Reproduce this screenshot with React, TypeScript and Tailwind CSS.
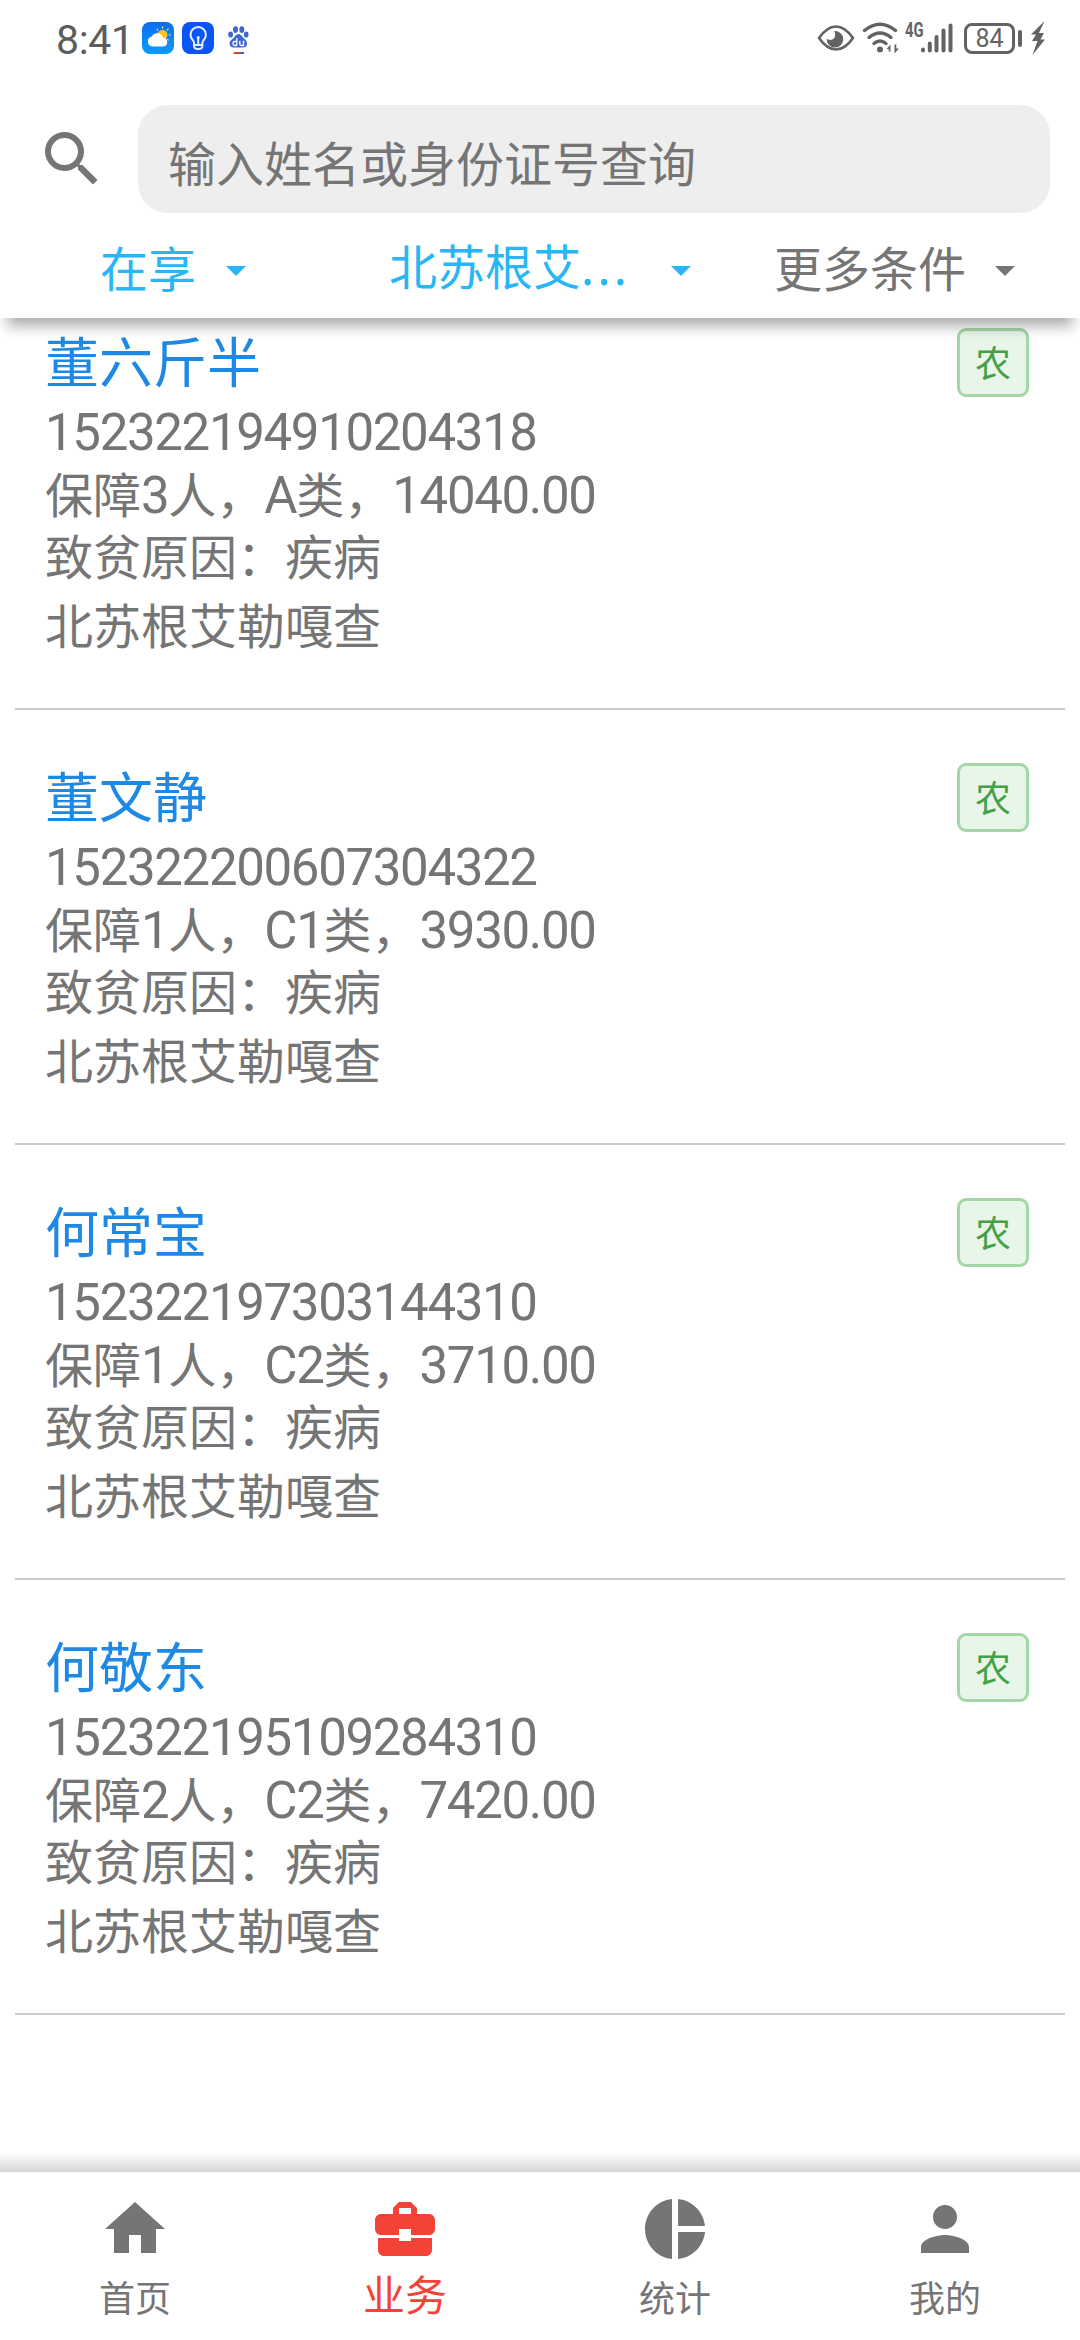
import React from "react";

type RecordItem = {
  name: string;
  id: string;
  summary: string;
  reason: string;
  village: string;
};

const records: RecordItem[] = [
  { name: "董六斤半", id: "152322194910204318", summary: "保障3人，A类，14040.00", reason: "致贫原因：疾病", village: "北苏根艾勒嘎查" },
  { name: "董文静", id: "152322200607304322", summary: "保障1人，C1类，3930.00", reason: "致贫原因：疾病", village: "北苏根艾勒嘎查" },
  { name: "何常宝", id: "152322197303144310", summary: "保障1人，C2类，3710.00", reason: "致贫原因：疾病", village: "北苏根艾勒嘎查" },
  { name: "何敬东", id: "152322195109284310", summary: "保障2人，C2类，7420.00", reason: "致贫原因：疾病", village: "北苏根艾勒嘎查" },
];

/* Latin letters and digits are set slightly larger than the Chinese text around them. */
function Mixed({ text }: { text: string }) {
  return (
    <>
      {text.split(/([A-Za-z0-9.]+)/).filter(Boolean).map((part, i) =>
        /^[A-Za-z0-9.]/.test(part) ? (
          <span key={i} className="font-['Roboto','Noto_Sans_CJK_SC',sans-serif] text-[51px] leading-none tracking-[-1.35px]">{part}</span>
        ) : (
          <React.Fragment key={i}>{part}</React.Fragment>
        ),
      )}
    </>
  );
}

function StatusBar() {
  return (
    <div className="flex h-[76px] items-center text-[#636363]">
      <div className="ml-[56px] w-[86px] pt-[5px] font-['Roboto',sans-serif] text-[41px] font-normal leading-none tracking-[-0.3px] text-[#5c5c5c]">8:41</div>
      <svg className="size-8" viewBox="0 0 32 32">
        <defs>
          <linearGradient id="sky" x1="0" y1="0" x2="0" y2="1">
            <stop offset="0" stopColor="#0a6cf2" />
            <stop offset="1" stopColor="#0a9cff" />
          </linearGradient>
        </defs>
        <rect width="32" height="32" rx="8" fill="url(#sky)" />
        <circle cx="20.500" cy="13" r="5" fill="#ffc21f" />
        <g stroke="#ffd34d" strokeWidth="1.300" strokeLinecap="round">
          <path d="M20.500 6V5M25.300 8l.8-.9M27.300 12.800h1M15.700 8l-.6-.8M25.500 17.500l.7.6" />
        </g>
        <path d="M10.500 24.500a5 5 0 0 1-.6-9.900 6 6 0 0 1 11 .8 4.600 4.600 0 0 1 .6 9.100z" fill="#fff" />
      </svg>
      <svg className="ml-2 size-8" viewBox="0 0 32 32">
        <rect width="32" height="32" rx="8" fill="#0b55f4" />
        <g fill="none" stroke="#e3f0ff" strokeWidth="2" strokeLinecap="round" strokeLinejoin="round">
          <path d="M12 20.500c0-2-3.500-3.500-3.500-7.800a7.700 7.700 0 0 1 15.400 0c0 4.300-3.500 5.800-3.500 7.800M12 20.500v3.500c0 4 8.400 4 8.400 0v-3.500" />
          <path d="M12.500 23h7.400M16.200 16v6.500" />
        </g>
        <circle cx="16.200" cy="15.500" r="1.500" fill="#e3f0ff" />
      </svg>
      <svg className="ml-[13px] h-8 w-6" viewBox="0 0 24 32">
        <g fill="#3f66cf">
          <ellipse cx="3.600" cy="12.500" rx="2.400" ry="3.100" />
          <ellipse cx="8.500" cy="7.600" rx="2.500" ry="3.400" />
          <ellipse cx="14.800" cy="7.600" rx="2.500" ry="3.400" />
          <ellipse cx="19.200" cy="12.500" rx="2.300" ry="3.100" />
          <path d="M11.500 12c2.500 0 3.500 2.400 5 4 2 2 3.800 3 3.500 6-.2 2.500-1.800 3.500-4 3.500H7c-2.500 0-4.200-1-4.400-3.500-.2-3 2-4.200 3.900-6 1.500-1.600 2.500-4 5-4z" />
          <rect x="12" y="30" width="5" height="2" />
        </g>
        <rect x="6.500" y="30" width="6" height="2" fill="#e0453a" />
        <g fill="none" stroke="#fff" strokeWidth="1.300">
          <path d="M9.800 16v7.500M9.800 19.500H7.500q-1.500 0-1.500 2t1.500 2h2.300M12.800 18.800v3.200q0 1.500 1.500 1.500h2.200v-4.700" />
        </g>
      </svg>

      <div className="ml-auto mr-[34px] flex items-center">
        <svg className="h-[28px] w-[38px]" viewBox="0 0 38 28">
          <path d="M2 14Q10 2.500 19 2.500T36 14Q28 25.500 19 25.500T2 14z" fill="none" stroke="currentColor" strokeWidth="2.700" strokeLinejoin="round" />
          <path d="M17 7a8.300 8.300 0 1 1-7.300 7.500c2.500 2.500 6.800 1.500 8-1.500.9-2.300.5-4.500-.7-6z" fill="currentColor" />
        </svg>
        <svg className="ml-[7px] h-[32px] w-[38px]" viewBox="0 0 38 32">
          <g fill="none" stroke="currentColor" strokeWidth="3.400" strokeLinecap="round">
            <path d="M2.500 8.500q15.500-12.500 31 0" />
            <path d="M7 15.500q11-9 22 0" />
            <path d="M12 21.500q6-5 12 0" />
          </g>
          <circle cx="18" cy="27.500" r="3" fill="currentColor" />
          <path d="M24.500 27l4-4.500v7h-1.800V27zM37 26.500l-4.500 5v-9h1.800v4z" fill="currentColor" />
        </svg>
        <span className="mb-[16px] ml-[5px] inline-block w-[18px] origin-left scale-x-[0.74] font-['Roboto',sans-serif] text-[20px] font-bold leading-none">4G</span>
        <svg className="-ml-[3px] h-[32px] w-[34px]" viewBox="0 0 34 32">
          <g stroke="currentColor" strokeWidth="4" strokeLinecap="round">
            <path d="M3 28.500v-1M9.800 28.500v-7M16.500 28.500v-13.500M23.500 28.500v-20M30.500 28.500v-25" />
          </g>
        </svg>
        <div className="ml-[10px] flex h-[31px] w-[51px] items-center justify-center rounded-[8px] border-[3px] border-current pt-[1px] font-['Roboto',sans-serif] text-[25px] leading-none">84</div>
        <div className="ml-[3px] h-[17px] w-[4px] rounded-full bg-current" />
        <svg className="ml-[8px] h-[36px] w-[16px]" viewBox="0 0 16 36">
          <path d="M14.500 1L1 14.500h5L2 21h5.500L2.500 35 15 19.500h-4.500L14 13H9z" fill="currentColor" />
        </svg>
      </div>
    </div>
  );
}

function Arrow() {
  return (
    <svg className="mt-[10px] h-[10px] w-[20px] shrink-0" viewBox="0 0 20 10">
      <path d="M0 0h20L10 10z" fill="currentColor" />
    </svg>
  );
}

function Header() {
  return (
    <header className="relative z-10 h-[318px] shrink-0 bg-white">
      <StatusBar />
      <div className="mt-[29px] flex h-[108px] items-center pl-[36px] pr-[30px]">
        <svg className="size-[72px] text-[#757575]" viewBox="0 0 24 24" fill="currentColor">
          <path d="M15.500 14h-.79l-.28-.27A6.471 6.471 0 0 0 16 9.500 6.500 6.500 0 1 0 9.500 16c1.610 0 3.090-.59 4.230-1.570l.27.28v.79l5 4.990L20.490 19l-4.990-5zm-6 0C7.010 14 5 11.990 5 9.500S7.010 5 9.500 5 14 7.010 14 9.500 11.990 14 9.500 14z" />
        </svg>
        <div className="ml-[30px] flex h-full flex-1 items-center rounded-[30px] bg-[#eeeeee] pl-[30px] pt-[3px] text-[48px] leading-none text-[#757575]">
          输入姓名或身份证号查询
        </div>
      </div>
      <div className="flex h-[105px] items-center text-[48px] leading-none text-[#29b6f6]">
        <div className="ml-[100px] flex w-[289px] items-center gap-[30px]">
          <span>在享</span>
          <Arrow />
        </div>
        <div className="flex w-[385px] items-center">
          <span className="w-[282px] whitespace-nowrap">
            北苏根艾<span className="font-['Noto_Sans',sans-serif] text-[50px] leading-none tracking-[3px]">...</span>
          </span>
          <Arrow />
        </div>
        <div className="flex items-center gap-[29px] text-[#757575]">
          <span>更多条件</span>
          <Arrow />
        </div>
      </div>
      <div className="pointer-events-none absolute inset-x-0 top-full h-[30px] overflow-hidden">
        <div className="mx-[8px] -mt-[20px] h-[20px] shadow-[0_7px_14px_1px_rgba(0,0,0,0.33)]" />
      </div>
    </header>
  );
}

function Card({ item }: { item: RecordItem }) {
  return (
    <article className="mx-[15px] flex h-[435px] shrink-0 items-start justify-between border-b-2 border-[#cccccc] pl-[30px] pr-[36px]">
      <div className="pt-[47px] text-[48px] leading-[63px] text-[#757575]">
        <h2 className="h-[76px] text-[54px] leading-[76px] text-[#1e88e5]">{item.name}</h2>
        <p className="h-[63px]"><Mixed text={item.id} /></p>
        <p className="h-[63px]"><Mixed text={item.summary} /></p>
        <p className="h-[62px] leading-[61px]">{item.reason}</p>
        <p className="mt-[6px] h-[63px]">{item.village}</p>
      </div>
      <span className="mt-[53px] flex h-[69px] w-[72px] items-center justify-center rounded-[9px] border-[3px] border-[#a5d6a7] bg-[#e8f5e9] pb-[3px] text-[36px] leading-none text-[#43a047]">
        农
      </span>
    </article>
  );
}

const tabs = [
  { label: "首页", path: "M10 20v-6h4v6h5v-8h3L12 3 2 12h3v8z" },
  {
    label: "业务",
    active: true,
    path: "M10 16v-1H3.010L3 19c0 1.110.89 2 2 2h14c1.110 0 2-.89 2-2v-4h-7v1h-4zm10-9h-4.010V5l-2-2h-4l-2 2v2H4c-1.100 0-2 .9-2 2v3c0 1.110.89 2 2 2h6v-2h4v2h6c1.100 0 2-.9 2-2V9c0-1.100-.9-2-2-2zm-6 0h-4V5h4v2z",
  },
  {
    label: "统计",
    path: "M11 2v20c-5.070-.5-9-4.790-9-10s3.930-9.500 9-10zm2.030 0v8.990H22c-.47-4.740-4.240-8.520-8.970-8.990zm0 11.010V22c4.740-.47 8.500-4.250 8.970-8.990h-8.970z",
  },
  { label: "我的", path: "M12 12c2.210 0 4-1.790 4-4s-1.790-4-4-4-4 1.790-4 4 1.790 4 4 4zm0 2c-2.670 0-8 1.340-8 4v2h16v-2c0-2.660-5.330-4-8-4z" },
];

function TabBar() {
  return (
    <nav className="relative z-10 grid h-[168px] shrink-0 grid-cols-4 bg-white">
      <div className="pointer-events-none absolute inset-x-0 bottom-full h-[20px] bg-linear-to-t from-black/17 via-black/8 to-transparent" />
      {tabs.map((tab) => (
        <div key={tab.label} className={tab.active ? "flex flex-col items-center pt-[21px] text-[#f44336]" : "flex flex-col items-center pt-[21px] text-[#757575]"}>
          <svg className="size-[72px]" viewBox="0 0 24 24" fill="currentColor">
            <path d={tab.path} />
          </svg>
          <span className={tab.active ? "mt-[6px] text-[42px] leading-[44px]" : "mt-[9px] text-[36px] leading-[44px]"}>{tab.label}</span>
        </div>
      ))}
    </nav>
  );
}

export default function App() {
  return (
    <div className="flex h-[2340px] w-[1080px] flex-col overflow-hidden bg-white font-['Noto_Sans_CJK_SC',sans-serif]">
      <Header />
      <main className="-mt-[43px] flex min-h-0 flex-1 flex-col">
        {records.map((item) => (
          <Card key={item.id} item={item} />
        ))}
      </main>
      <TabBar />
    </div>
  );
}
